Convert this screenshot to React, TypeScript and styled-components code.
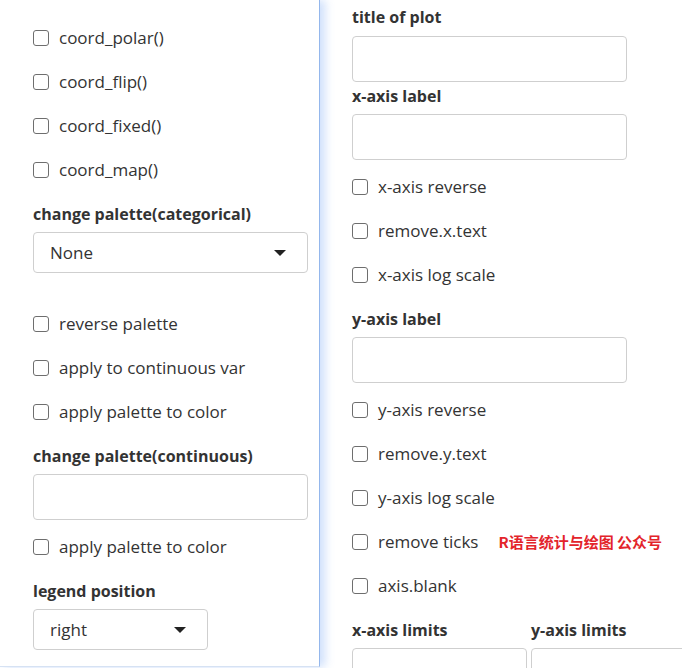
import React from "react";
import styled, { createGlobalStyle } from "styled-components";

const Global = createGlobalStyle`
  html, body { margin: 0; padding: 0; background: #fff; }
  body {
    font-family: "Open Sans", "Noto Sans", "Noto Sans CJK SC", sans-serif;
    font-size: 16px;
    color: #333;
    overflow: hidden;
  }
`;

const Page = styled.div`
  display: flex;
  align-items: flex-start;
  width: 682px;
  height: 668px;
  overflow: hidden;
`;

const Sidebar = styled.aside`
  position: relative;
  z-index: 1;
  flex: 0 0 320px;
  box-sizing: border-box;
  width: 320px;
  height: 667px;
  padding: 26px 12px 0 33px;
  background: #fff;
  border-right: 1px solid #94b7ec;
  border-bottom: 1px solid #d6e2f3;
  box-shadow: 5px 0 9px rgba(80, 140, 240, 0.28);
  overflow: hidden;
`;

const Main = styled.main`
  flex: 1 1 auto;
  box-sizing: border-box;
  padding: 5px 0 0 32px;
  height: 668px;
  overflow: hidden;
`;

const Row = styled.label<{ $mb?: number }>`
  display: flex;
  align-items: center;
  gap: 10px;
  height: 24px;
  line-height: 24px;
  font-size: 17px;
  margin-bottom: ${(p) => (p.$mb ?? 20)}px;
  white-space: nowrap;
`;

const Box = styled.span`
  flex: 0 0 auto;
  box-sizing: border-box;
  width: 16px;
  height: 16px;
  border: 1px solid #6e6e6e;
  border-radius: 3px;
  background: #fff;
`;

const FieldLabel = styled.div<{ $mb?: number }>`
  font-weight: 700;
  line-height: 24px;
  height: 24px;
  margin-bottom: ${(p) => (p.$mb ?? 6)}px;
  white-space: nowrap;
  color: #333;
`;

const TextBox = styled.div<{ $w?: number; $mb?: number }>`
  box-sizing: border-box;
  width: ${(p) => p.$w ?? 275}px;
  height: 46px;
  border: 1px solid #cfcfcf;
  border-radius: 4px;
  background: #fff;
  margin-bottom: ${(p) => (p.$mb ?? 15)}px;
`;

const Select = styled.div<{ $w: number; $mb?: number }>`
  box-sizing: border-box;
  display: flex;
  align-items: center;
  justify-content: space-between;
  width: ${(p) => p.$w}px;
  height: 41px;
  padding: 0 21px 0 16px;
  border: 1px solid #cfcfcf;
  border-radius: 4px;
  background: #fff;
  font-size: 17px;
  margin-bottom: ${(p) => (p.$mb ?? 15)}px;
`;

const Caret = styled.span`
  width: 0;
  height: 0;
  border-left: 6px solid transparent;
  border-right: 6px solid transparent;
  border-top: 6px solid #222;
`;

const Note = styled.span`
  margin-left: 10px;
  font-family: "Noto Sans CJK SC", "Noto Sans", sans-serif;
  font-size: 15px;
  font-weight: 700;
  color: #e3242b;
`;

const Pair = styled.div`
  display: flex;
  gap: 4px;
`;

const Col = styled.div`
  flex: 0 0 175px;
`;

const Check = ({ text, mb, children }: { text: string; mb?: number; children?: React.ReactNode }) => (
  <Row $mb={mb}>
    <Box />
    <span>{text}</span>
    {children}
  </Row>
);

export default function App() {
  return (
    <>
      <Global />
      <Page>
        <Sidebar>
          <Check text="coord_polar()" />
          <Check text="coord_flip()" />
          <Check text="coord_fixed()" />
          <Check text="coord_map()" />
          <FieldLabel>change palette(categorical)</FieldLabel>
          <Select $w={275} $mb={39}>
            <span>None</span>
            <Caret />
          </Select>
          <Check text="reverse palette" />
          <Check text="apply to continuous var" />
          <Check text="apply palette to color" />
          <FieldLabel>change palette(continuous)</FieldLabel>
          <TextBox />
          <Check text="apply palette to color" />
          <FieldLabel>legend position</FieldLabel>
          <Select $w={175}>
            <span>right</span>
            <Caret />
          </Select>
        </Sidebar>
        <Main>
          <FieldLabel $mb={7}>title of plot</FieldLabel>
          <TextBox $mb={2} />
          <FieldLabel>x-axis label</FieldLabel>
          <TextBox />
          <Check text="x-axis reverse" />
          <Check text="remove.x.text" />
          <Check text="x-axis log scale" />
          <FieldLabel>y-axis label</FieldLabel>
          <TextBox />
          <Check text="y-axis reverse" />
          <Check text="remove.y.text" />
          <Check text="y-axis log scale" />
          <Check text="remove ticks">
            <Note>R语言统计与绘图 公众号</Note>
          </Check>
          <Check text="axis.blank" />
          <Pair>
            <Col>
              <FieldLabel>x-axis limits</FieldLabel>
              <TextBox $w={175} />
            </Col>
            <Col>
              <FieldLabel>y-axis limits</FieldLabel>
              <TextBox $w={175} />
            </Col>
          </Pair>
        </Main>
      </Page>
    </>
  );
}
